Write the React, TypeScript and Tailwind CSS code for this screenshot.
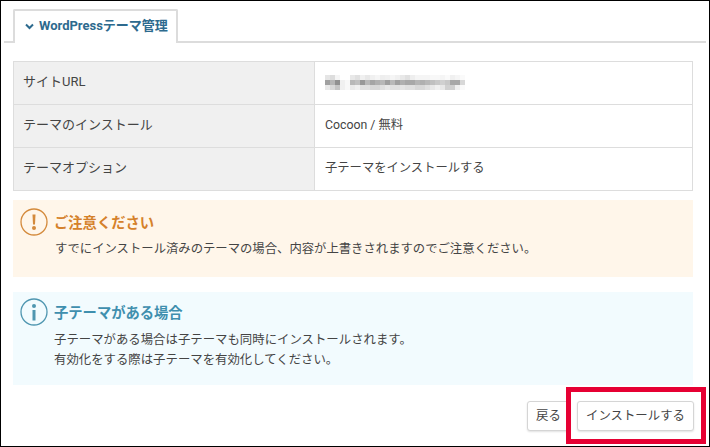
const font = "font-['Roboto','Noto_Sans_CJK_JP',sans-serif]"

// the URL in the reference is hidden behind a mosaic
const mosaic = [
  "e5 dd f5 ff ff e8 e0 f0 e8 f0 f5 ee f0 f5 f0 e8 e0 ee f5 f5 f5 f8 f8 f5 fa f0 f5 fa",
  "a0 b5 90 f0 f8 b8 c0 98 b8 a5 b0 b8 a0 b8 a0 b0 a8 a8 b5 b0 b8 c0 c8 d0 c8 a8 a8 d8",
  "e8 d8 c4 f0 f8 ea f0 e0 e0 d8 d8 e0 e8 e0 e0 e5 e0 e0 d8 d8 e0 e8 f0 e8 d0 d0 f0 fa",
]

function Mosaic() {
  return (
    <svg width="140" height="15" viewBox="0 0 140 15">
      {mosaic.map((row, y) =>
        row.split(" ").map((v, x) => (
          <rect key={`${x}-${y}`} x={x * 5} y={y * 5} width="5" height="5" fill={`#${v}${v}${v}`} />
        ))
      )}
    </svg>
  )
}

const rows = [
  { label: "サイトURL", value: <Mosaic /> },
  { label: "テーマのインストール", value: "Cocoon / 無料" },
  { label: "テーマオプション", value: "子テーマをインストールする" },
]

function NoticeIcon({ color, kind }: { color: string; kind: "warn" | "info" }) {
  return (
    <svg width="28" height="28" viewBox="0 0 28 28" className="shrink-0">
      <circle cx="14" cy="14" r="13" fill="none" stroke={color} strokeWidth="1.3" />
      {kind === "warn" ? (
        <>
          <path d="M12.5 6.5h3l-.5 10h-2z" fill={color} />
          <circle cx="14" cy="20" r="2" fill={color} />
        </>
      ) : (
        <>
          <circle cx="14" cy="8" r="2" fill={color} />
          <rect x="12.5" y="12" width="3" height="10.5" fill={color} />
        </>
      )}
    </svg>
  )
}

export default function App() {
  return (
    <div className={`${font} relative h-[447px] w-[710px] overflow-hidden border border-black bg-white`}>
      {/* Tab */}
      <div className="mx-[3px] mt-[8px] flex h-[34px] items-end border-b-2 border-[#dcdcdc] pl-[9px]">
        <div className="-mb-[2px] flex h-[34px] w-[165px] items-center gap-[5px] rounded-t-[2px] border-x-2 border-t-2 border-[#dcdcdc] border-b-0 bg-white pl-[10px] pb-[2px] text-[13px] font-bold text-[#2d6a8e]">
          <svg width="9" height="7" viewBox="0 0 9 7">
            <path d="M1 1.5l3.5 3.5L8 1.5" fill="none" stroke="#2d6a8e" strokeWidth="2" />
          </svg>
          WordPressテーマ管理
        </div>
      </div>

      <div className="ml-[12px] mt-[18px] w-[680px]">
        {/* Settings table */}
        <div className="border-x border-b border-[#dddddd]">
          {rows.map((row) => (
            <div key={row.label} className="flex h-[43px] border-t border-[#dddddd] text-[#444]">
              <div className="flex w-[301px] items-center border-r border-[#dddddd] bg-[#f0f0f0] pb-[2px] pl-[9px] text-[13px]">
                {row.label}
              </div>
              <div className="flex flex-1 items-center pb-[2px] pl-[10px] text-[12.3px]">{row.value}</div>
            </div>
          ))}
        </div>

        {/* Notices */}
        <div className="mt-[9px] h-[77px] bg-[#fff6ea] pl-[7px] pt-[8px]">
          <div className="flex items-center gap-[6px]">
            <NoticeIcon color="#d48a3c" kind="warn" />
            <span className="pt-[4px] text-[14.3px] font-bold text-[#d5812b]">ご注意ください</span>
          </div>
          <p className="mt-[4px] pl-[35px] text-[12.35px] text-[#444]">
            すでにインストール済みのテーマの場合、内容が上書きされますのでご注意ください。
          </p>
        </div>

        <div className="mt-[15px] h-[93px] bg-[#f2fbfe] pl-[7px] pt-[6px]">
          <div className="flex items-center gap-[6px]">
            <NoticeIcon color="#4f96b0" kind="info" />
            <span className="pt-[4px] text-[14.3px] font-bold text-[#3f8fae]">子テーマがある場合</span>
          </div>
          <p className="mt-[4px] pl-[34px] text-[12.4px] leading-[20px] text-[#444]">
            子テーマがある場合は子テーマも同時にインストールされます。
            <br />
            有効化をする際は子テーマを有効化してください。
          </p>
        </div>

        {/* Actions */}
        <div className="mt-[16px] flex w-[681px] justify-end gap-[7px]">
          <button className="h-[30px] w-[43px] rounded-[3px] border border-[#d5d5d5] bg-white text-[12.4px] text-[#444] shadow-[0_1px_2px_rgba(0,0,0,0.12)]">
            戻る
          </button>
          <button className="h-[30px] w-[117px] rounded-[3px] border border-[#d5d5d5] bg-white text-[12.4px] text-[#444] shadow-[0_1px_2px_rgba(0,0,0,0.12)]">
            インストールする
          </button>
        </div>
      </div>

      {/* Red highlight over the install button */}
      <div className="absolute left-[565px] top-[386px] h-[57px] w-[140px] border-[5px] border-[#e60033]" />
    </div>
  )
}
